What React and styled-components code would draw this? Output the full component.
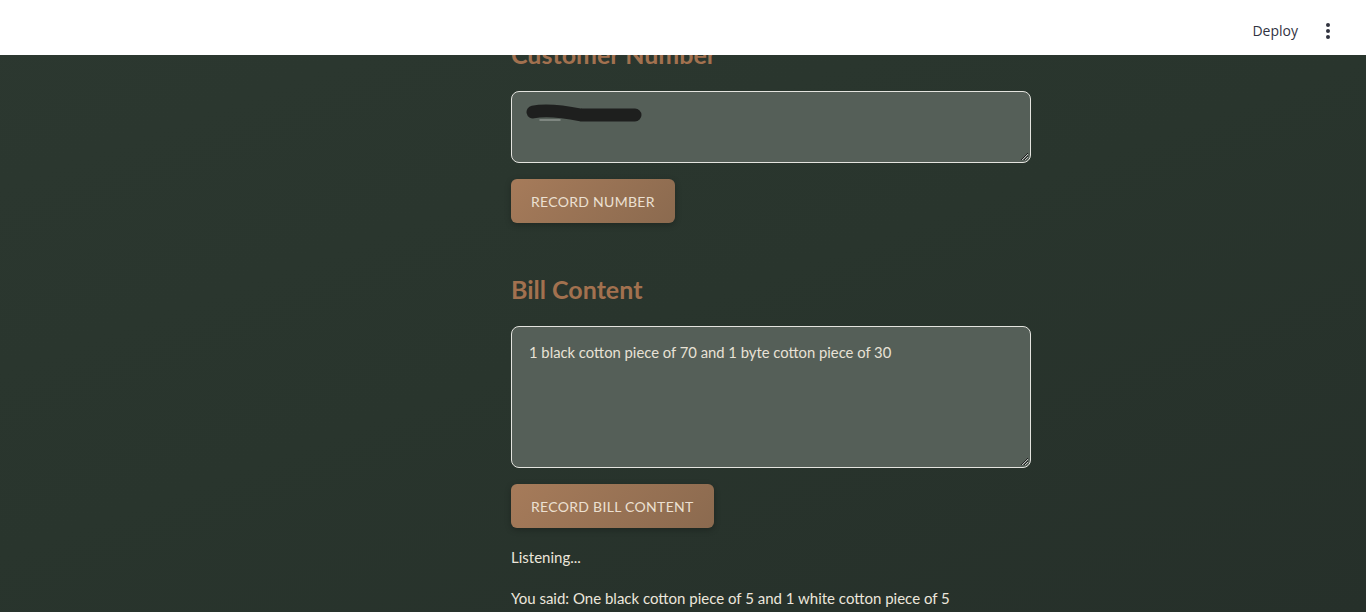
import React from 'react';
import styled, { createGlobalStyle } from 'styled-components';

const GlobalStyle = createGlobalStyle`
  html, body {
    margin: 0;
    padding: 0;
    height: 100%;
  }
  body {
    font-family: Lato, "Noto Sans", sans-serif;
    background: linear-gradient(160deg, #2c3830 0%, #29352d 50%, #26302a 100%);
    background-attachment: fixed;
    overflow: hidden;
  }
`;

const Header = styled.header`
  position: fixed;
  top: 0;
  left: 0;
  right: 0;
  height: 55px;
  box-sizing: border-box;
  padding: 6px 28px 0 0;
  background: #ffffff;
  display: flex;
  align-items: center;
  justify-content: flex-end;
  gap: 20px;
  z-index: 10;
`;

const DeployLink = styled.span`
  font-family: "Open Sans", "Noto Sans", sans-serif;
  font-size: 14px;
  color: #31333f;
`;

const Kebab = styled.div`
  display: flex;
  flex-direction: column;
  gap: 2px;
  padding: 4px 8px;
  span {
    width: 4px;
    height: 4px;
    border-radius: 50%;
    background: #31333f;
  }
`;

const Main = styled.main`
  padding: 38px 0 0 511px;
`;

const Column = styled.div`
  width: 520px;
  display: flex;
  flex-direction: column;
`;

const Heading = styled.h3`
  margin: ${p => (p.$first ? '0' : '50px')} 0 21px;
  font-size: 25px;
  line-height: 32px;
  font-weight: 700;
  color: #a2714f;
`;

const TextBox = styled.div`
  position: relative;
  box-sizing: border-box;
  height: ${p => p.$height}px;
  background: #555f58;
  border: 1px solid #e4e4df;
  border-radius: 8px;
  padding: 15px 17px;
  color: #e8e2d6;
  font-size: 14.8px;
  line-height: 20px;
`;

const Grip = styled.svg`
  position: absolute;
  right: 1px;
  bottom: 1px;
`;

const Redacted = styled.svg`
  display: block;
  margin: -3px 0 0 -3px;
`;

const Button = styled.button`
  align-self: flex-start;
  margin-top: 16px;
  height: 44px;
  padding: 0 20px;
  border: none;
  border-radius: 6px;
  background: linear-gradient(135deg, #a67b5a 0%, #8b6a4f 100%);
  box-shadow: 0 2px 6px rgba(0, 0, 0, 0.25);
  color: #ece0d2;
  font-family: Lato, "Noto Sans", sans-serif;
  font-size: 14px;
  letter-spacing: 0.3px;
  text-transform: uppercase;
`;

const Note = styled.p`
  margin: ${p => p.$gap}px 0 0;
  color: #ece6dc;
  font-size: 15px;
  line-height: 20px;
`;

const ResizeGrip = () => (
  <Grip width="10" height="10" viewBox="0 0 10 10">
    <path d="M9 2 L2 9 M9 5 L5 9" stroke="#1e1e1e" strokeWidth="1" />
    <path d="M9 3 L3 9 M9 6 L6 9" stroke="#d8d8d8" strokeWidth="0.8" />
  </Grip>
);

export default function App() {
  return (
    <>
      <GlobalStyle />
      <Header>
        <DeployLink>Deploy</DeployLink>
        <Kebab>
          <span />
          <span />
          <span />
        </Kebab>
      </Header>
      <Main>
        <Column>
          <Heading $first>Customer Number</Heading>
          <TextBox $height={72}>
            <Redacted width="120" height="22" viewBox="0 0 120 22">
              <path d="M14 16 L 34 16" stroke="#cfd3cf" strokeOpacity="0.45" strokeWidth="1.5" strokeLinecap="round" fill="none" />
              <path d="M7 8 C 22 5, 40 8, 55 11 L 109 11" stroke="#1e1f1e" strokeWidth="13" strokeLinecap="round" fill="none" />
            </Redacted>
            <ResizeGrip />
          </TextBox>
          <Button>Record Number</Button>

          <Heading>Bill Content</Heading>
          <TextBox $height={142}>
            1 black cotton piece of 70 and 1 byte cotton piece of 30
            <ResizeGrip />
          </TextBox>
          <Button>Record Bill Content</Button>

          <Note $gap={19}>Listening...</Note>
          <Note $gap={21}>You said: One black cotton piece of 5 and 1 white cotton piece of 5</Note>
        </Column>
      </Main>
    </>
  );
}
